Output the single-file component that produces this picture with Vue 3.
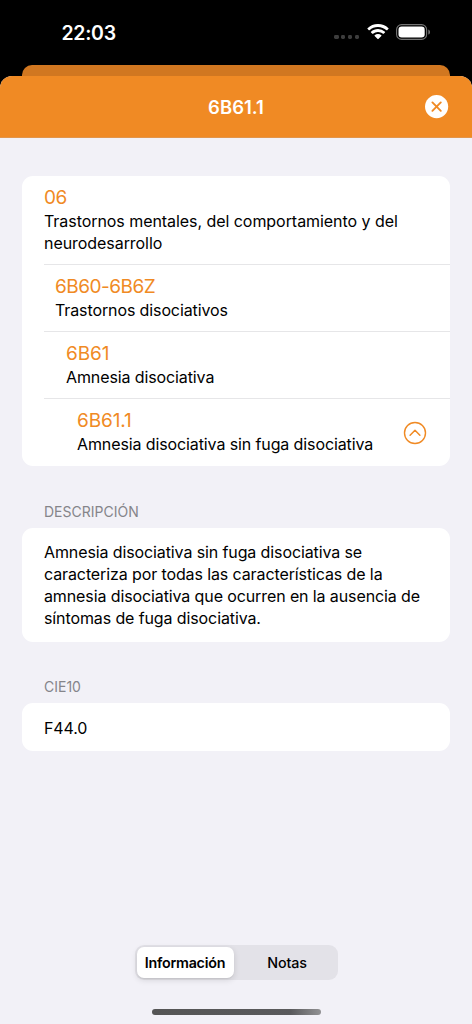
<script setup>
import { ref } from 'vue'

const levels = [
  { code: '06', lines: ['Trastornos mentales, del comportamiento y del', 'neurodesarrollo'] },
  { code: '6B60-6B6Z', lines: ['Trastornos disociativos'] },
  { code: '6B61', lines: ['Amnesia disociativa'] },
  { code: '6B61.1', lines: ['Amnesia disociativa sin fuga disociativa'] },
]
const description = [
  'Amnesia disociativa sin fuga disociativa se',
  'caracteriza por todas las características de la',
  'amnesia disociativa que ocurren en la ausencia de',
  'síntomas de fuga disociativa.',
]
const tab = ref('Información')
</script>

<template>
  <div class="phone">
    <div class="status">
      <span class="time">22:03</span>
      <div class="indicators">
        <div class="dots"><i v-for="n in 4" :key="n"></i></div>
        <svg class="wifi" width="22" height="16" viewBox="0 0 22 16">
          <path fill="#fff" d="M11 0C6.9 0 3.2 1.600.5 4.200a.45.45 0 0 0 0 .65l1.350 1.350c.2.200.5.200.7 0A12.200 12.200 0 0 1 11 2.900c3.250 0 6.250 1.250 8.450 3.300.2.200.5.200.7 0l1.350-1.350a.45.45 0 0 0 0-.65A15.200 15.200 0 0 0 11 0Z" />
          <path fill="#fff" d="M11 5.100c-2.700 0-5.150 1-7 2.700a.45.45 0 0 0 0 .65l1.400 1.400c.2.200.45.200.65 0A7.300 7.300 0 0 1 11 8c1.900 0 3.650.7 4.950 1.850.2.200.45.200.65 0l1.400-1.400a.45.45 0 0 0 0-.65 10.300 10.300 0 0 0-7-2.700Z" />
          <path fill="#fff" d="M11 10.100c-1.300 0-2.450.45-3.350 1.200-.25.200-.25.500 0 .7l3 3c.2.200.5.200.7 0l3-3c.25-.2.250-.5 0-.7-.9-.75-2.050-1.200-3.350-1.200Z" />
        </svg>
        <svg class="battery" width="35" height="16" viewBox="0 0 35 16">
          <rect x=".6" y=".6" width="30" height="14.800" rx="5" fill="none" stroke="#747474" stroke-width="1.100" />
          <rect x="2.500" y="2.500" width="26.200" height="11" rx="3.200" fill="#fff" />
          <path d="M32.300 5.400c2.300.9 2.300 4.300 0 5.200Z" fill="#747474" />
        </svg>
      </div>
    </div>
    <div class="behind"></div>
    <div class="sheet">
      <header class="bar">
        <h1>6B61.1</h1>
        <button class="close" aria-label="Cerrar">
          <svg width="24" height="24" viewBox="0 0 24 24">
            <circle cx="11.600" cy="11.600" r="11.600" fill="#fff" />
            <path d="M7.400 7.400l8.400 8.400M15.800 7.400l-8.400 8.400" stroke="#f08a24" stroke-width="1.900" stroke-linecap="round" />
          </svg>
        </button>
      </header>

      <main class="content">
        <section class="card">
          <div v-for="(level, i) in levels" :key="level.code" class="row" :class="'level' + i">
            <div class="text">
              <div class="code">{{ level.code }}</div>
              <div v-for="line in level.lines" :key="line" class="line">{{ line }}</div>
            </div>
            <svg v-if="i === 3" class="up" width="24" height="24" viewBox="0 0 24 24" fill="none" stroke="#f08a24" stroke-linecap="round" stroke-linejoin="round">
              <circle cx="12" cy="12" r="10.500" stroke-width="1.400" />
              <path d="M7.100 14.200L12 9.200l4.900 5" stroke-width="1.500" />
            </svg>
          </div>
        </section>

        <h2 class="label">DESCRIPCIÓN</h2>
        <section class="card block">
          <div v-for="line in description" :key="line" class="line">{{ line }}</div>
        </section>

        <h2 class="label">CIE10</h2>
        <section class="card block"><div class="line">F44.0</div></section>
      </main>

      <footer class="footer">
        <div class="segments">
          <button
            v-for="name in ['Información', 'Notas']"
            :key="name"
            :class="{ active: tab === name }"
            @click="tab = name"
          >{{ name }}</button>
        </div>
        <div class="home"></div>
      </footer>
    </div>
  </div>
</template>

<style>
html, body { margin: 0; background: #000; }
</style>

<style scoped>
* { box-sizing: border-box; }
.phone {
  width: 472px;
  height: 1024px;
  display: flex;
  flex-direction: column;
  overflow: hidden;
  background: #000;
  color: #000;
  font-family: Inter, "Liberation Sans", sans-serif;
}
.status {
  flex: none;
  height: 65px;
  padding: 0 41px 0 61.500px;
  display: flex;
  justify-content: space-between;
}
.time { margin-top: 21px; font-size: 19.500px; line-height: 24px; font-weight: 600; color: #fff; letter-spacing: -.3px; }
.indicators { display: flex; align-items: flex-start; padding-top: 24px; }
.dots { display: flex; gap: 2.600px; margin: 11px 7.500px 0 0; }
.dots i { width: 4.200px; height: 4.200px; border-radius: 1.400px; background: #3d3d3d; }
.wifi { margin-right: 7.500px; }
.behind { flex: none; height: 11px; margin: 0 22px; border-radius: 10px 10px 0 0; background: #d17720; }
.sheet { flex: 1; display: flex; flex-direction: column; background: #f2f1f7; border-radius: 12px 12px 0 0; overflow: hidden; }
.bar {
  flex: none;
  height: 62px;
  display: grid;
  grid-template-columns: 1fr auto 1fr;
  align-items: center;
  padding: 0 23px;
  background: #f08a24;
  border-bottom: 1px solid #e2954b;
}
h1 { grid-column: 2; margin: 0; color: #fff; font-size: 18.500px; line-height: 24px; font-weight: 600; letter-spacing: 0; }
button { border: 0; padding: 0; background: none; font: inherit; color: inherit; }
.close { justify-self: end; width: 24px; height: 24px; display: block; }
.close svg { display: block; }
.content { flex: 1; padding: 38px 22px 0; }
.card { background: #fff; border-radius: 11px; width: 428px; }
.row { display: flex; margin-left: 22px; padding: 10px 23px 10px 0; border-bottom: 1px solid #e6e6e8; }
.row:last-child { border: 0; padding-bottom: 11px; }
.text { flex: 1; }
.level1 { padding-left: 11px; }
.level2 { padding-left: 22px; }
.level3 { padding-left: 33px; }
.code { font-size: 19px; line-height: 24px; color: #f08a24; letter-spacing: -.1px; }
.level0 .code { letter-spacing: -.5px; }
.level1 .code { letter-spacing: -.5px; }
.line { font-size: 16px; line-height: 22px; white-space: nowrap; letter-spacing: -.11px; }
.level0 .line { letter-spacing: -.055px; }
.label { margin: 35px 0 5px 22px; font-size: 14px; line-height: 22px; font-weight: 400; color: #85858a; }
.up { align-self: center; margin-top: 2px; }
.card + .label { margin-top: 34.500px; }
.block { padding: 13.500px 22px 12.500px; }
.footer { flex: none; display: flex; flex-direction: column; align-items: center; padding-bottom: 9px; }
.segments { width: 203px; height: 35px; padding: 2px; border-radius: 9px; background: #e3e2e8; display: flex; }
.segments button { flex: 1; padding: 0 0 1px 5px; border-radius: 7px; font-size: 14.300px; font-weight: 500; letter-spacing: -.15px; }
.segments .active { flex: none; width: 97px; height: 31px; padding-left: 0; background: #fff; font-weight: 600; letter-spacing: -.25px; box-shadow: 0 2px 6px rgba(0, 0, 0, .13), 0 1px 1px rgba(0, 0, 0, .05); }
.home { width: 169px; height: 6px; margin-top: 29px; border-radius: 3px; background: linear-gradient(90deg, #555, #5a5a5c 82%, #929294); }
</style>
